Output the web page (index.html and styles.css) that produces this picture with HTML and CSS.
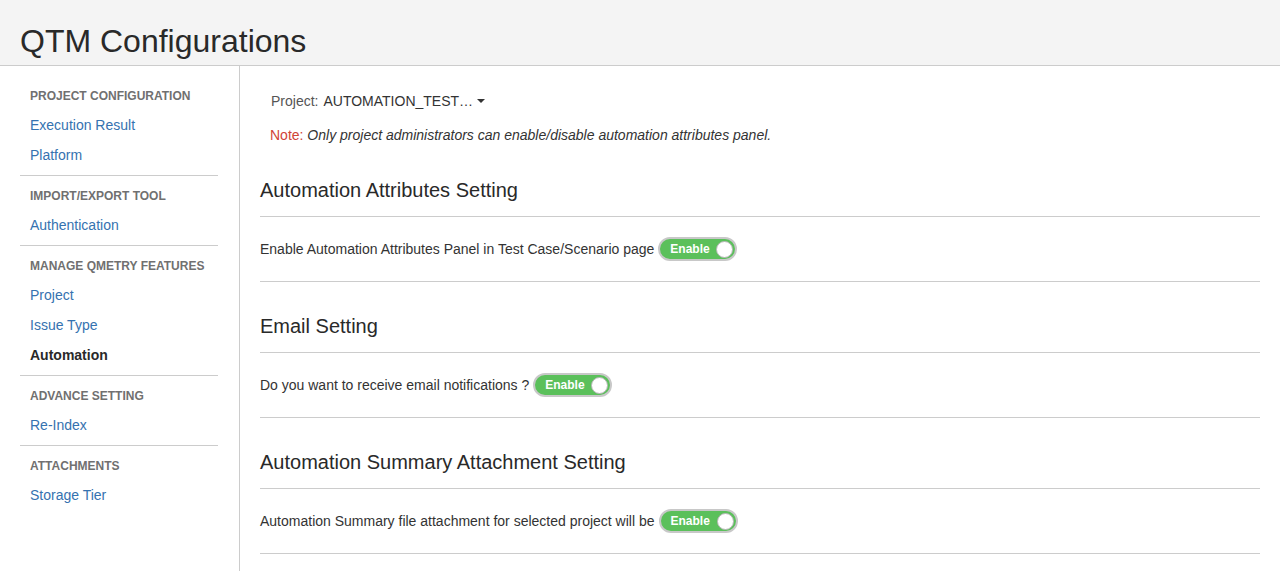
FILE: index.html
```html
<!DOCTYPE html>
<html>
<head>
<meta charset="utf-8">
<title>QTM Configurations</title>
<link rel="stylesheet" href="styles.css">
</head>
<body>
<header class="page-header">
  <h1 class="page-title">QTM Configurations</h1>
</header>
<div class="layout">
  <nav class="sidebar">
    <div class="nav-group">
      <div class="nav-heading">PROJECT CONFIGURATION</div>
      <a class="nav-link">Execution Result</a>
      <a class="nav-link">Platform</a>
    </div>
    <div class="nav-group">
      <div class="nav-heading">IMPORT/EXPORT TOOL</div>
      <a class="nav-link">Authentication</a>
    </div>
    <div class="nav-group">
      <div class="nav-heading">MANAGE QMETRY FEATURES</div>
      <a class="nav-link">Project</a>
      <a class="nav-link">Issue Type</a>
      <a class="nav-link active">Automation</a>
    </div>
    <div class="nav-group">
      <div class="nav-heading">ADVANCE SETTING</div>
      <a class="nav-link">Re-Index</a>
    </div>
    <div class="nav-group">
      <div class="nav-heading">ATTACHMENTS</div>
      <a class="nav-link">Storage Tier</a>
    </div>
  </nav>
  <main class="content">
    <div class="project-picker">
      <span class="picker-label">Project:</span>
      <span class="picker-value">AUTOMATION_TEST…</span>
      <span class="caret"></span>
    </div>
    <p class="note"><span class="note-label">Note:</span> <em>Only project administrators can enable/disable automation attributes panel.</em></p>

    <section class="setting">
      <h2 class="setting-title">Automation Attributes Setting</h2>
      <div class="setting-row">
        <span>Enable Automation Attributes Panel in Test Case/Scenario page</span>
        <span class="toggle"><span class="toggle-text">Enable</span><span class="knob"></span></span>
      </div>
    </section>

    <section class="setting">
      <h2 class="setting-title">Email Setting</h2>
      <div class="setting-row">
        <span>Do you want to receive email notifications ?</span>
        <span class="toggle"><span class="toggle-text">Enable</span><span class="knob"></span></span>
      </div>
    </section>

    <section class="setting">
      <h2 class="setting-title">Automation Summary Attachment Setting</h2>
      <div class="setting-row">
        <span>Automation Summary file attachment for selected project will be</span>
        <span class="toggle"><span class="toggle-text">Enable</span><span class="knob"></span></span>
      </div>
    </section>
  </main>
</div>
</body>
</html>
```

FILE: styles.css
```css
* { box-sizing: border-box; }

html, body {
  margin: 0;
  padding: 0;
  height: 100%;
}

body {
  font-family: "Liberation Sans", Arial, sans-serif;
  color: #333;
  background: #fff;
  font-size: 14px;
}

.page-header {
  height: 66px;
  background: #f4f4f4;
  border-bottom: 1px solid #cccccc;
  padding: 23px 20px 0;
}

.page-title {
  margin: 0;
  font-size: 32px;
  line-height: 36px;
  font-weight: normal;
  color: #292929;
}

.layout {
  display: flex;
  min-height: calc(100% - 66px);
}

.sidebar {
  width: 240px;
  flex: none;
  border-right: 1px solid #cccccc;
  padding: 15px 21px 15px 20px;
}

.nav-group {
  display: flex;
  flex-direction: column;
}

.nav-group + .nav-group {
  border-top: 1px solid #cccccc;
  margin-top: 4px;
  padding-top: 5px;
}

.nav-heading {
  padding-left: 10px;
  line-height: 30px;
  font-size: 12px;
  font-weight: bold;
  color: #707070;
}

.nav-link {
  padding-left: 10px;
  line-height: 30px;
  font-size: 14px;
  color: #3572b0;
  text-decoration: none;
  position: relative;
  top: -1px;
}

.nav-link.active {
  color: #292929;
  font-weight: bold;
}

.content {
  flex: 1;
  padding: 25px 20px 0 20px;
}

.project-picker {
  display: flex;
  align-items: center;
  line-height: 20px;
  padding-left: 11px;
  font-size: 14px;
}

.picker-label {
  color: #555;
  margin-right: 5px;
}

.picker-value {
  color: #333;
}

.caret {
  width: 0;
  height: 0;
  border-left: 4px solid transparent;
  border-right: 4px solid transparent;
  border-top: 4px solid #333;
  margin-left: 4px;
}

.note {
  margin: 14px 0 0 10px;
  padding-bottom: 1px;
  line-height: 20px;
  font-size: 14px;
  color: #333;
}

.note-label {
  color: #d04437;
}

.setting {
  margin-top: 32px;
}

.setting-title {
  margin: 0;
  font-size: 20px;
  line-height: 24px;
  font-weight: normal;
  color: #292929;
  padding-bottom: 14px;
  border-bottom: 1px solid #cccccc;
}

.setting-row {
  display: flex;
  align-items: center;
  padding: 20px 0;
  border-bottom: 1px solid #cccccc;
  font-size: 14px;
  line-height: 24px;
  color: #333;
}

.toggle {
  display: inline-flex;
  align-items: center;
  justify-content: space-between;
  width: 79px;
  height: 24px;
  margin-left: 4px;
  border: 2px solid #c8c8c8;
  border-radius: 12px;
  background: #5bc05b;
  padding: 0 2px 0 10px;
}

.toggle-text {
  color: #fff;
  font-size: 12px;
  font-weight: bold;
  line-height: 20px;
}

.knob {
  width: 17px;
  height: 17px;
  border-radius: 50%;
  background: #fff;
  border: 1px solid #b5b5b5;
}
```
